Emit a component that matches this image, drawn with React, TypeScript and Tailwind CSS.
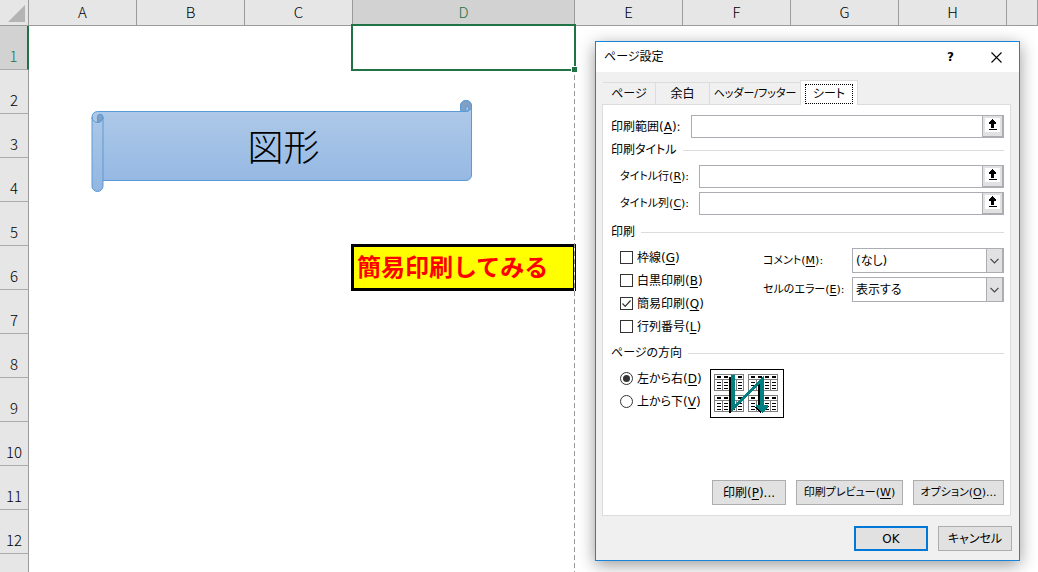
import React, { useState } from 'react';

const COLUMNS = ['A', 'B', 'C', 'D', 'E', 'F', 'G', 'H', ''];
const ROWS = [1, 2, 3, 4, 5, 6, 7, 8, 9, 10, 11, 12];

function Key({ k }: { k: string }) {
  return (
    <>
      (<span className="underline underline-offset-2">{k}</span>)
    </>
  );
}

function Selection() {
  return (
    <div className="pointer-events-none absolute -top-0.5 -right-px -bottom-px -left-0.5 z-10 border-2 border-[#217346]">
      <span className="absolute -right-1 -bottom-1 h-[7px] w-[7px] border border-white bg-[#217346]" />
    </div>
  );
}

function Sheet() {
  return (
    <table className="w-full table-fixed border-separate border-spacing-0 font-['Noto_Sans_CJK_JP',sans-serif] text-[15px]">
      <colgroup>
        <col className="w-[29px]" />
        <col className="w-[108px]" />
        <col className="w-[108px]" />
        <col className="w-[108px]" />
        <col className="w-[222px]" />
        <col className="w-[108px]" />
        <col className="w-[108px]" />
        <col className="w-[108px]" />
        <col className="w-[108px]" />
        <col />
      </colgroup>
      <thead>
        <tr className="h-[26px]">
          <th className="border-r border-b border-[#9b9b9b] bg-[#e6e6e6] p-0">
            <svg viewBox="0 0 28 25" className="block h-[25px] w-7">
              <path d="M25 5v17H8z" fill="#b4b4b4" />
            </svg>
          </th>
          {COLUMNS.map((c) => (
            <th
              key={c}
              scope="col"
              className={`border-r border-b border-[#9b9b9b] p-0 pb-0.5 leading-[22px] font-light ${
                c === 'D' ? 'bg-[#d2d2d2] text-[#217346]' : 'bg-[#e6e6e6] text-black'
              }`}
            >
              {c}
            </th>
          ))}
        </tr>
      </thead>
      <tbody>
        {ROWS.map((r) => (
          <tr key={r} className="h-11">
            <th
              scope="row"
              className={`border-b border-b-[#ababab] p-0 pt-4 leading-6 font-light ${
                r === 1
                  ? 'border-r-2 border-r-[#217346] bg-[#d2d2d2] text-[#217346]'
                  : 'border-r border-r-[#9b9b9b] bg-[#e6e6e6] text-black'
              }`}
            >
              {r}
            </th>
            {COLUMNS.map((c) => (
              <td key={c} className="relative p-0">
                {c === 'D' && r === 1 && <Selection />}
                {c === 'D' && r === 6 && (
                  <div className="absolute -top-0.5 -right-px -bottom-px -left-0.5 flex items-center border-3 border-black bg-[#ffff00] pb-1 pl-[3px] text-2xl font-bold whitespace-nowrap text-[#ff0000]">
                    簡易印刷してみる
                  </div>
                )}
              </td>
            ))}
          </tr>
        ))}
        <tr className="h-11">
          <th className="border-r border-[#9b9b9b] bg-[#e6e6e6]" />
          <td colSpan={COLUMNS.length} />
        </tr>
      </tbody>
    </table>
  );
}

function ScrollShape() {
  return (
    <div className="absolute top-[100px] left-[91px] flex h-[93px] w-[382px] items-center justify-center">
      <svg viewBox="0 0 382 93" className="absolute inset-0 h-full w-full">
        <defs>
          <linearGradient id="fill" x1="0" y1="0" x2="0" y2="1">
            <stop offset="0" stopColor="#b1cbe9" />
            <stop offset="1" stopColor="#92b6e2" />
          </linearGradient>
        </defs>
        <g stroke="#5b9bd5" strokeWidth="1">
          <path
            d="M6.5 11.5H369.5V6a5.5 5.5 0 0 1 11 0V75a5.5 5.5 0 0 1-5.5 5.5H12V86a5.5 5.5 0 0 1-11 0V17a5.5 5.5 0 0 1 5.5-5.5z"
            fill="url(#fill)"
          />
          <path
            d="M369.5 11.5V6a5.5 5.5 0 1 1 5.5 5.5a2.7 2.7 0 0 0 0-5.5v5.5z"
            fill="#839fc2"
          />
          <path d="M6.5 22.5V17a2.7 2.7 0 0 1 5.5 0a5.5 5.5 0 0 1-5.5 5.5z" fill="#839fc2" />
          <path d="M1 17a5.5 5.5 0 0 0 11 0V81" fill="none" />
        </g>
      </svg>
      <span className="relative pr-px pb-1 pl-1 font-['Noto_Sans_CJK_JP',sans-serif] text-4xl font-light text-black">
        図形
      </span>
    </div>
  );
}

function Section({ title }: { title: string }) {
  return (
    <div className="flex h-5 items-center gap-1.5">
      <h3>{title}</h3>
      <div className="h-px flex-1 bg-[#dcdcdc]" />
    </div>
  );
}

function RangeField({ id, label, k, labelClass }: { id: string; label: string; k: string; labelClass: string }) {
  return (
    <div className="flex items-center">
      <label htmlFor={id} className={`shrink-0 whitespace-nowrap ${labelClass}`}>
        {label}
        <Key k={k} />:
      </label>
      <div className="flex h-[23px] min-w-0 flex-1 border border-[#abadb3]">
        <input id={id} type="text" className="min-w-0 flex-1 bg-white px-1 outline-none" />
        <button
          type="button"
          aria-label={`${label}の選択`}
          className="flex w-[21px] justify-center border-r border-b border-l border-[#abadb3] bg-[#e1e1e1] pt-0.5"
        >
          <svg viewBox="0 0 15 14" className="h-3.5 w-[15px] bg-white" shapeRendering="crispEdges">
            <path d="M7 1h1v1h1v1h1v1h1v2H9v4H6V6H4V4h1V3h1V2h1zM4 11h8v1H4z" />
          </svg>
        </button>
      </div>
    </div>
  );
}

function Check({ label, k, defaultChecked }: { label: string; k: string; defaultChecked?: boolean }) {
  return (
    <label className="flex h-[23px] items-center gap-1">
      <span className="grid shrink-0">
        <input
          type="checkbox"
          defaultChecked={defaultChecked}
          className="peer col-start-1 row-start-1 h-[13px] w-[13px] appearance-none border border-[#333] bg-white"
        />
        <svg
          viewBox="0 0 13 13"
          className="pointer-events-none invisible col-start-1 row-start-1 h-[13px] w-[13px] peer-checked:visible"
        >
          <path d="M2.5 6.5l2.7 2.8 5.3-5.8" fill="none" stroke="#333" strokeWidth="1.2" />
        </svg>
      </span>
      <span>
        {label}
        <Key k={k} />
      </span>
    </label>
  );
}

function Radio({ label, k, defaultChecked }: { label: string; k: string; defaultChecked?: boolean }) {
  return (
    <label className="flex h-[23px] items-center gap-1">
      <span className="grid shrink-0 place-items-center">
        <input
          type="radio"
          name="order"
          defaultChecked={defaultChecked}
          className="peer col-start-1 row-start-1 h-[13px] w-[13px] appearance-none rounded-full border border-[#333] bg-white"
        />
        <span className="pointer-events-none invisible col-start-1 row-start-1 h-[7px] w-[7px] rounded-full bg-[#333] peer-checked:visible" />
      </span>
      <span>
        {label}
        <Key k={k} />
      </span>
    </label>
  );
}

function Dropdown({ id, label, k, options }: { id: string; label: string; k: string; options: string[] }) {
  return (
    <div className="flex items-center">
      <label htmlFor={id} className="w-[89px] shrink-0 text-[11px] whitespace-nowrap">
        {label}
        <Key k={k} />:
      </label>
      <div className="grid h-[25px] min-w-0 flex-1 border border-[#abadb3]">
        <select
          id={id}
          className="col-start-1 row-start-1 w-full appearance-none bg-white pl-[3px] outline-none"
        >
          {options.map((o) => (
            <option key={o}>{o}</option>
          ))}
        </select>
        <span className="pointer-events-none col-start-1 row-start-1 flex w-[17px] items-center justify-center justify-self-end border-r border-l border-[#abadb3] bg-[#e1e1e1]">
          <svg viewBox="0 0 9 6" className="h-1.5 w-[9px]">
            <path d="M.5 .8l4 4 4-4" fill="none" stroke="#444" strokeWidth="1.2" />
          </svg>
        </span>
      </div>
    </div>
  );
}

function MiniTable({ x, y }: { x: number; y: number }) {
  return (
    <g transform={`translate(${x} ${y})`}>
      <path
        d="M.5 .5h29v16h-29zM.5 5.5h29M8.5 5.5v11M15.5 5.5v11M22.5 5.5v11"
        fill="none"
        stroke="#808080"
      />
      <path d="M3 3h4M10 3h4M17 3h4M24 3h4" stroke="#000" strokeWidth="2" />
      {[8.5, 11.5, 14.5].map((ly) => (
        <path key={ly} d={`M3 ${ly}h4M10 ${ly}h4M17 ${ly}h4M24 ${ly}h4`} stroke="#000" />
      ))}
    </g>
  );
}

function OrderPreview() {
  return (
    <svg viewBox="0 0 74 49" className="h-[49px] w-[74px]" shapeRendering="crispEdges">
      <path d="M.5 .5h73v48h-73z" fill="#fff" stroke="#000" />
      <MiniTable x={4} y={5} />
      <MiniTable x={38} y={5} />
      <MiniTable x={4} y={26} />
      <MiniTable x={38} y={26} />
      <path d="M19 8h2v36h-2zM48 14h2v24h-2zM44 38h4l4 4-1 2z" fill="#000" />
      <path d="M21 6h4v30L50 10 54 6v30h4v2l-6 6-6-6v-2h4V15L21 43z" fill="#008080" />
    </svg>
  );
}

function DialogButton({ children, className }: { children: React.ReactNode; className: string }) {
  return (
    <button
      type="button"
      className={`flex h-[25px] items-center justify-center bg-[#e1e1e1] whitespace-nowrap ${className}`}
    >
      <span>{children}</span>
    </button>
  );
}

const TABS = [
  { name: 'ページ', style: 'w-[53px]' },
  { name: '余白', style: 'w-[54px]' },
  { name: 'ヘッダー/フッター', style: 'w-[91px] text-[11px]' },
  { name: 'シート', style: 'w-[58px]' },
];

function PageSetup() {
  const [tab, setTab] = useState('シート');
  return (
    <div
      role="dialog"
      aria-label="ページ設定"
      className="absolute top-[41px] left-[595px] z-20 w-[425px] border border-[#1883d7] bg-[#f0f0f0] font-['DejaVu_Sans','Noto_Sans_CJK_JP',sans-serif] text-xs leading-4 text-black shadow-[0_4px_16px_rgba(0,0,0,0.4)] [font-feature-settings:'palt']"
    >
      <div className="flex h-[30px] items-center bg-white pl-2">
        <h2 className="flex-1">ページ設定</h2>
        <button type="button" aria-label="ヘルプ" className="h-full w-[45px] font-bold">
          ?
        </button>
        <button type="button" aria-label="閉じる" className="flex h-full w-[46px] items-center justify-center">
          <svg viewBox="0 0 11 11" className="h-[11px] w-[11px]">
            <path d="M.5 .5l10 10M10.5 .5l-10 10" stroke="#000" strokeWidth="1.1" />
          </svg>
        </button>
      </div>
      <div className="pt-2 pr-[7px] pb-[9px] pl-1.5">
        <div role="tablist" className="flex items-end pl-px">
          {TABS.map((t) =>
            t.name === tab ? (
              <button
                key={t.name}
                type="button"
                role="tab"
                aria-selected
                className={`relative -mb-px -ml-px h-[25px] border border-b-0 border-[#dcdcdc] bg-white px-1 pt-[3px] pb-px ${t.style}`}
              >
                <span className="flex h-5 items-center justify-center border border-dotted border-black">
                  {t.name}
                </span>
              </button>
            ) : (
              <button
                key={t.name}
                type="button"
                role="tab"
                aria-selected={false}
                onClick={() => setTab(t.name)}
                className={`h-[22px] border-t border-r border-[#dcdcdc] whitespace-nowrap ${t.style}`}
              >
                {t.name}
              </button>
            ),
          )}
        </div>
        <div className="mr-px border border-[#dcdcdc] bg-white pt-2.5 pr-1.5 pb-2.5 pl-2">
          <RangeField id="area" label="印刷範囲" k="A" labelClass="w-20" />
          <div className="mt-0.5">
            <Section title="印刷タイトル" />
          </div>
          <div className="mt-[5px] flex flex-col gap-1">
            <RangeField id="rows" label="タイトル行" k="R" labelClass="w-[88px] pl-[9px] text-[11px]" />
            <RangeField id="cols" label="タイトル列" k="C" labelClass="w-[88px] pl-[9px] text-[11px]" />
          </div>
          <div className="mt-[7px]">
            <Section title="印刷" />
          </div>
          <div className="mt-1 flex pl-[9px]">
            <div className="w-[143px]">
              <Check label="枠線" k="G" />
              <Check label="白黒印刷" k="B" />
              <Check label="簡易印刷" k="Q" defaultChecked />
              <Check label="行列番号" k="L" />
            </div>
            <div className="flex flex-1 flex-col gap-1 pt-0.5">
              <Dropdown id="comments" label="コメント" k="M" options={['(なし)', 'シートの末尾']} />
              <Dropdown id="errors" label="セルのエラー" k="E" options={['表示する', '<空白>']} />
            </div>
          </div>
          <div className="mt-[5px]">
            <Section title="ページの方向" />
          </div>
          <div className="mt-1 flex pl-[9px]">
            <div className="w-[90px]">
              <Radio label="左から右" k="D" defaultChecked />
              <Radio label="上から下" k="V" />
            </div>
            <div className="pt-0.5">
              <OrderPreview />
            </div>
          </div>
          <div className="mt-[62px] flex justify-end gap-2.5">
            <DialogButton className="w-[74px] border border-[#adadad]">
              印刷
              <Key k="P" />
              ...
            </DialogButton>
            <DialogButton className="w-[107px] border border-[#adadad] text-[11px]">
              印刷プレビュー
              <Key k="W" />
            </DialogButton>
            <DialogButton className="w-[91px] border border-[#adadad] text-[11px]">
              オプション
              <Key k="O" />
              ...
            </DialogButton>
          </div>
        </div>
        <div className="mt-2.5 flex justify-end gap-2.5">
          <DialogButton className="w-[74px] border-2 border-[#0078d7]">OK</DialogButton>
          <DialogButton className="w-[74px] border border-[#adadad]">キャンセル</DialogButton>
        </div>
      </div>
    </div>
  );
}

export default function App() {
  return (
    <main className="relative h-screen overflow-hidden bg-white">
      <Sheet />
      <div className="pointer-events-none absolute top-[75px] bottom-0 left-[574px] w-px bg-[repeating-linear-gradient(to_bottom,#999_0,#999_5px,#fff_5px,#fff_8px)]" />
      <ScrollShape />
      <PageSetup />
    </main>
  );
}
